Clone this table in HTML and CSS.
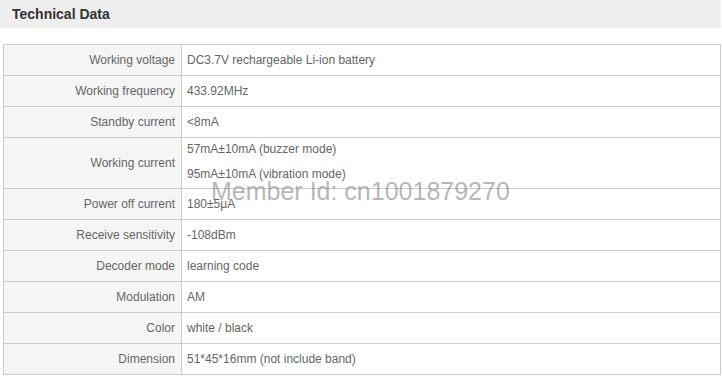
FILE: index.html
```html
<!DOCTYPE html>
<html>
<head>
<meta charset="utf-8">
<link rel="stylesheet" href="styles.css">
</head>
<body>
<div class="page">
  <div class="header"><h2 class="title">Technical Data</h2></div>
  <table class="spec">
    <tr><td class="label">Working voltage</td><td class="value">DC3.7V rechargeable Li-ion battery</td></tr>
    <tr><td class="label">Working frequency</td><td class="value">433.92MHz</td></tr>
    <tr><td class="label">Standby current</td><td class="value">&lt;8mA</td></tr>
    <tr><td class="label">Working current</td><td class="value multi"><div class="line">57mA±10mA (buzzer mode)</div><div class="line">95mA±10mA (vibration mode)</div></td></tr>
    <tr><td class="label">Power off current</td><td class="value">180±5μA</td></tr>
    <tr><td class="label">Receive sensitivity</td><td class="value">-108dBm</td></tr>
    <tr><td class="label">Decoder mode</td><td class="value">learning code</td></tr>
    <tr><td class="label">Modulation</td><td class="value">AM</td></tr>
    <tr><td class="label">Color</td><td class="value">white / black</td></tr>
    <tr><td class="label">Dimension</td><td class="value">51*45*16mm (not include band)</td></tr>
  </table>
  <div class="watermark">Member Id: cn1001879270</div>
</div>
</body>
</html>
```
FILE: styles.css
```css
html, body {
  margin: 0;
  padding: 0;
  background: #fff;
}
.page {
  position: relative;
  width: 722px;
  height: 380px;
  font-family: "Liberation Sans", Arial, sans-serif;
}
.header {
  width: 721px;
  height: 28px;
  background: #eeeeee;
  display: flex;
  align-items: center;
}
.title {
  margin: 0 0 0 12px;
  font-size: 14px;
  font-weight: bold;
  color: #333;
}
.spec {
  margin: 16px 0 0 3px;
  width: 718px;
  border-collapse: collapse;
  font-size: 12px;
  color: #666;
}
.spec td {
  border: 1px solid #cccccc;
  padding: 0 6px;
  height: 30px;
  line-height: 30px;
  vertical-align: middle;
}
.spec td.label {
  width: 165px;
  text-align: right;
  background: #f5f5f5;
}
.spec td.value {
  text-align: left;
  background: #fff;
  padding-left: 5px;
}
.spec td.multi {
  height: 50px;
  line-height: 25px;
}
.line {
  height: 25px;
  position: relative;
  top: -1px;
}
.watermark {
  position: absolute;
  left: 211px;
  top: 177px;
  font-size: 25px;
  color: rgba(120, 120, 120, 0.55);
  white-space: nowrap;
  pointer-events: none;
}
```
